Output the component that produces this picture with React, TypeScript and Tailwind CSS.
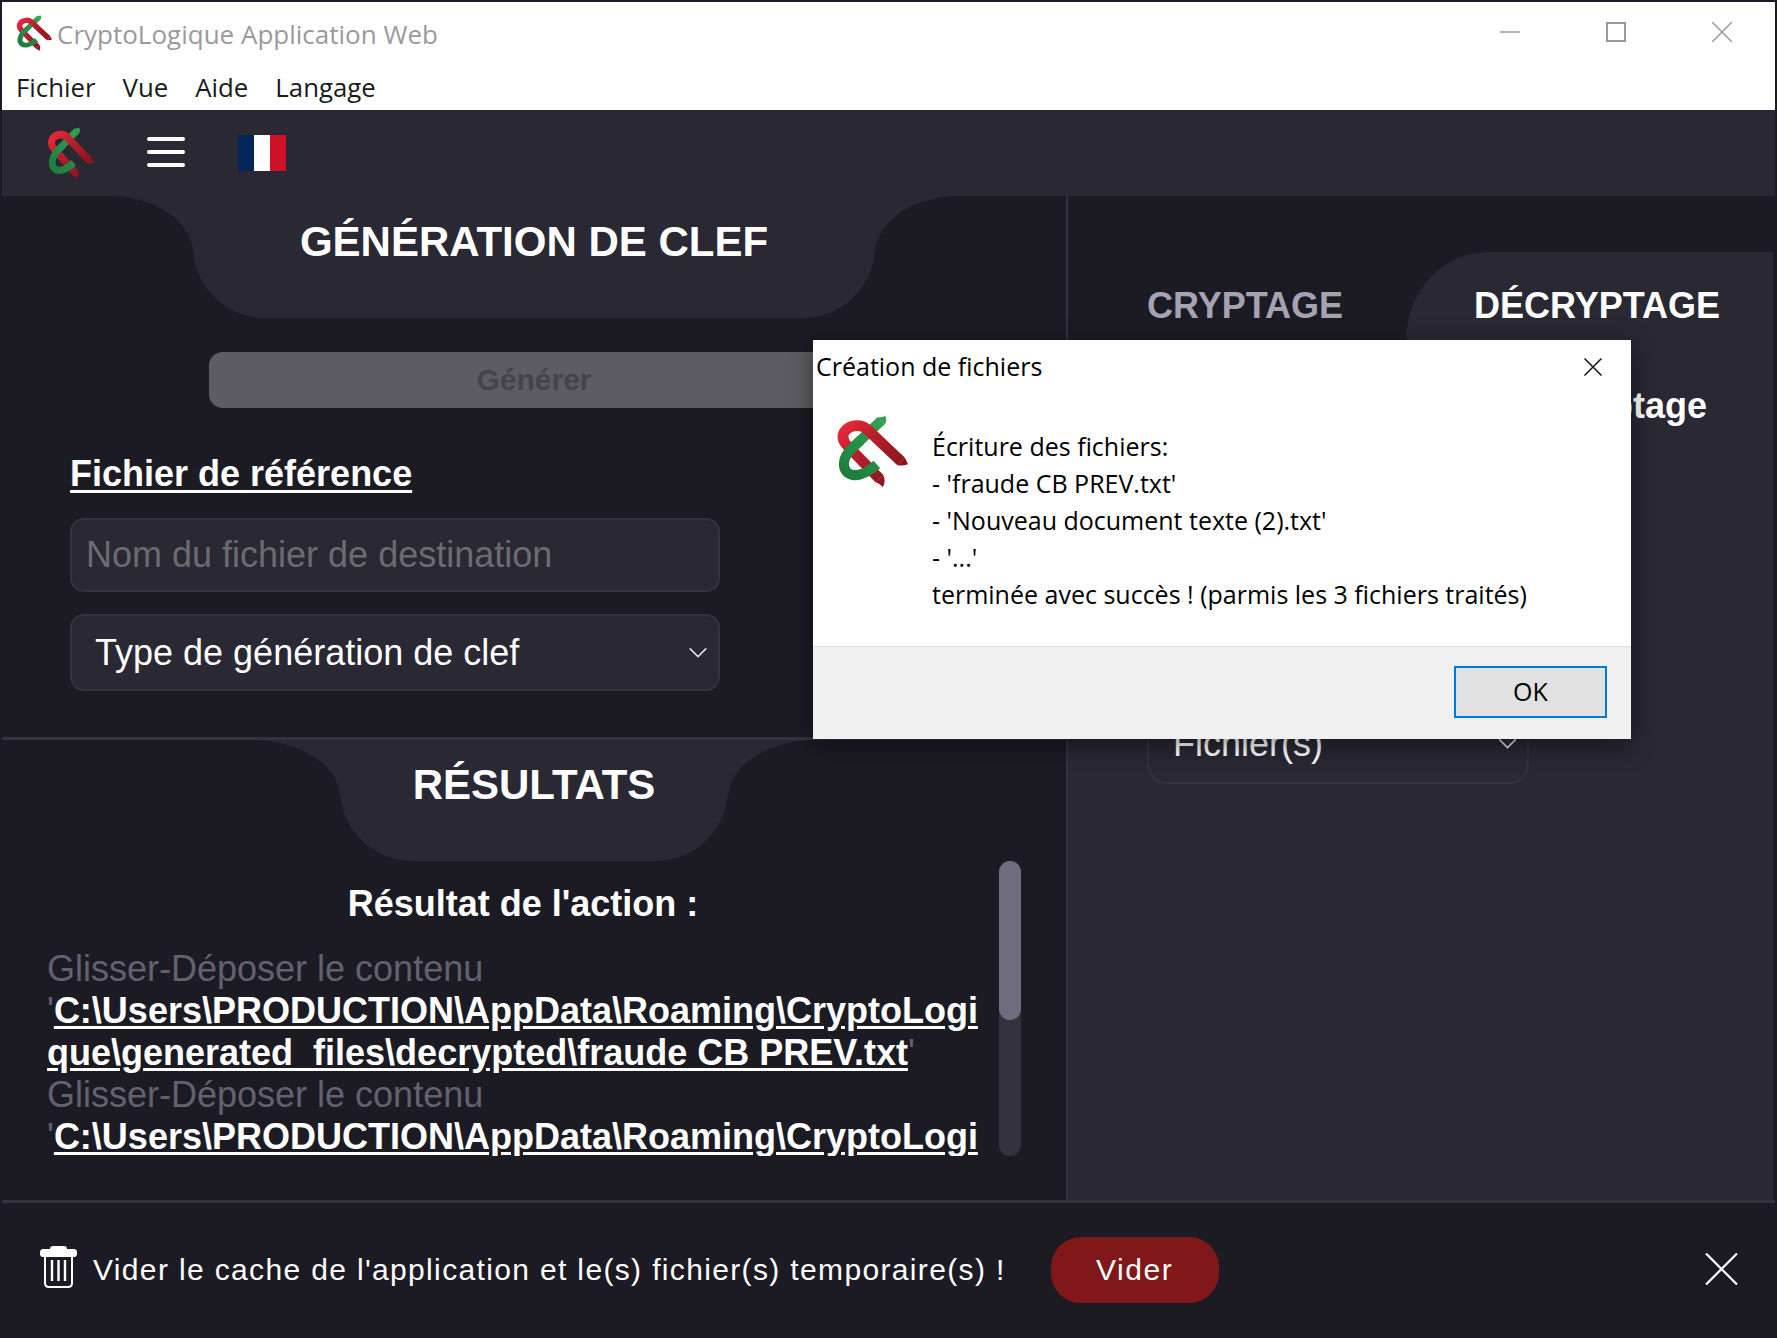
import React, { FC, useId } from "react";

const arial = "font-['Liberation_Sans',Arial,sans-serif]";
const segoe = "font-['Open_Sans',sans-serif]";

type LogoProps = {
  className: string;
};

const Logo: FC<LogoProps> = ({ className }) => {
  const id = useId();
  const red = `url(#${id}r)`;
  const green = `url(#${id}g)`;
  return (
    <svg viewBox="0 0 215 215" preserveAspectRatio="none" className={className}>
      <defs>
        <linearGradient id={`${id}r`} gradientUnits="userSpaceOnUse" x1="10" y1="20" x2="200" y2="190">
          <stop offset="0" stopColor="#ee2b3c" />
          <stop offset="0.4" stopColor="#b81f2d" />
          <stop offset="1" stopColor="#7f1319" />
        </linearGradient>
        <linearGradient id={`${id}g`} gradientUnits="userSpaceOnUse" x1="150" y1="0" x2="20" y2="190">
          <stop offset="0" stopColor="#35a557" />
          <stop offset="1" stopColor="#1c7a3a" />
        </linearGradient>
      </defs>
      {/* green strand behind the red one */}
      <path d="M135 17 L44 103" fill="none" stroke={green} strokeWidth="30" />
      <path d="M124 6 Q138 8 147 2 Q154 16 146 28 Z" fill={green} />
      {/* red strand */}
      <path d="M195 139 L92 42 C74 26 46 30 30 44 C14 60 20 78 34 92 L130 190" fill="none" stroke={red} strokeWidth="32" />
      <path d="M206 128 L215 147 Q200 153 184 150 Z" fill={red} />
      <path d="M141 179 Q150 198 140 215 Q132 206 119 201 Z" fill={red} />
      {/* green strand over the red one */}
      <path d="M74 75 L44 103 C20 128 18 158 34 172 C54 188 88 178 122 148" fill="none" stroke={green} strokeWidth="30" />
    </svg>
  );
};

// concave corners that flare a tab out of the top of its section
const TabFlare: FC<{ side: "left" | "right"; width: string; height: string }> = ({ side, width, height }) => {
  if (side === "left") {
    return (
      <div className={`absolute top-0 right-full bg-[#292833] ${width} ${height}`}>
        <div className="h-full w-full rounded-tr-[100%] bg-[#1c1b24]" />
      </div>
    );
  }
  return (
    <div className={`absolute top-0 left-full bg-[#292833] ${width} ${height}`}>
      <div className="h-full w-full rounded-tl-[100%] bg-[#1c1b24]" />
    </div>
  );
};

const Chevron: FC<{ className: string }> = ({ className }) => (
  <svg viewBox="0 0 20 12" className={className} fill="none" stroke="currentColor" strokeWidth="1.6">
    <path d="M1 1.5 L10 10.5 L19 1.5" />
  </svg>
);

const TitleBar: FC = () => (
  <div className={`${segoe} bg-white`}>
    <div className="relative flex h-[62px] items-center pl-[14px]">
      <Logo className="h-[36px] w-[36px]" />
      <span className="ml-[5px] mt-[2px] text-[26px] leading-none text-[#9a9a9a]">CryptoLogique Application Web</span>
      <div className="absolute right-[43px] top-[20px] flex items-start gap-[86px] text-[#999999]">
        <svg width="20" height="20" viewBox="0 0 20 20" stroke="currentColor" strokeWidth="1.5">
          <path d="M0 10 H20" />
        </svg>
        <svg width="20" height="20" viewBox="0 0 20 20" fill="none" stroke="currentColor" strokeWidth="2">
          <rect x="1" y="1" width="18" height="18" />
        </svg>
        <svg width="20" height="20" viewBox="0 0 20 20" stroke="currentColor" strokeWidth="1.5">
          <path d="M0 0 L20 20 M20 0 L0 20" />
        </svg>
      </div>
    </div>
    <div className="flex h-[46px] items-start gap-[27px] pl-[14px] text-[25.8px] leading-[46px] text-[#1a1a1a]">
      <span>Fichier</span>
      <span>Vue</span>
      <span>Aide</span>
      <span>Langage</span>
    </div>
  </div>
);

const Toolbar: FC = () => (
  <div className="flex h-[86px] items-start bg-[#292833] pl-[45px]">
    <Logo className="mt-[17px] h-[52px] w-[47px]" />
    <div className="ml-[53px] mt-[27px] flex w-[38px] flex-col gap-[9px]">
      <div className="h-[4px] rounded-full bg-white" />
      <div className="h-[4px] rounded-full bg-white" />
      <div className="h-[4px] rounded-full bg-white" />
    </div>
    <div className="ml-[53px] mt-[25px] flex h-[36px] w-[48px]">
      <div className="w-1/3 bg-[#03265a]" />
      <div className="w-1/3 bg-white" />
      <div className="w-1/3 bg-[#ce1126]" />
    </div>
  </div>
);

const KeyPanel: FC = () => (
  <section className="h-[544px] border-b-[3px] border-[#33323e]">
    <div className="relative mx-auto h-[122px] w-[682px] rounded-b-[72px] bg-[#292833] pt-[21px] text-center">
      <TabFlare side="left" width="w-[84px]" height="h-[58px]" />
      <TabFlare side="right" width="w-[84px]" height="h-[58px]" />
      <h1 className="relative text-[42px] font-bold leading-[50px] text-white">GÉNÉRATION DE CLEF</h1>
    </div>
    <button className="mx-auto mt-[34px] block h-[56px] w-[650px] rounded-[14px] bg-[#5d5c62] pb-[2px] text-[30px] font-bold text-[#45444b]">
      Générer
    </button>
    <div className="ml-[68px] w-[650px]">
      <h2 className="mt-[48px] text-[36px] font-bold leading-[36px] text-white underline underline-offset-[4px]">
        Fichier de référence
      </h2>
      <input
        placeholder="Nom du fichier de destination"
        className="mt-[26px] block h-[74px] w-full rounded-[14px] border-2 border-[#33323e] bg-[#292833] px-[14px] text-[36px] outline-none placeholder:text-[#6c6c70]"
      />
      <div className="mt-[22px] flex h-[77px] items-center justify-between rounded-[14px] border-2 border-[#33323e] bg-[#292833] pl-[23px] pr-[10px] text-[36px] text-white">
        <span>Type de génération de clef</span>
        <Chevron className="h-[11px] w-[20px] text-[#e5e5e5]" />
      </div>
    </div>
  </section>
);

const ResultLine: FC<{ path: string }> = ({ path }) => (
  <>
    <span className="block text-[#63616f]">Glisser-Déposer le contenu</span>
    <span className="block break-all text-[#63616f]">
      '<span className="font-bold text-white underline underline-offset-[3px]">{path}</span>'
    </span>
  </>
);

const ResultsPanel: FC = () => (
  <section className="flex-1">
    <div className="relative mx-auto h-[121px] w-[388px] rounded-b-[72px] bg-[#292833] pt-[20px] text-center">
      <TabFlare side="left" width="w-[88px]" height="h-[58px]" />
      <TabFlare side="right" width="w-[88px]" height="h-[58px]" />
      <h1 className="relative text-[42px] font-bold leading-[50px] text-white">RÉSULTATS</h1>
    </div>
    <div className="flex pl-[45px]">
      <div className="h-[295px] w-[952px] overflow-hidden pt-[22px]">
        <h3 className="text-center text-[36px] font-bold leading-[42px] text-white">Résultat de l'action :</h3>
        <p className="mt-[23px] w-[935px] text-[36px] leading-[42px]">
          <ResultLine path="C:\Users\PRODUCTION\AppData\Roaming\CryptoLogique\generated_files\decrypted\fraude CB PREV.txt" />
          <ResultLine path="C:\Users\PRODUCTION\AppData\Roaming\CryptoLogique\generated_files\decrypted\Nouveau document texte (2).txt" />
        </p>
      </div>
      <div className="h-[295px] w-[22px] rounded-full bg-[#33323d]">
        <div className="h-[159px] rounded-full bg-[#6e6c7e]" />
      </div>
    </div>
  </section>
);

const DecryptPanel: FC = () => (
  <section className="flex w-[707px] flex-col border-l-2 border-[#33323e]">
    <div className="flex h-[144px] items-end">
      <div className="w-[338px] pb-[14px] pl-[79px] text-[36px] font-bold leading-[40px] text-[#a5a3b2]">CRYPTAGE</div>
      <div className="h-[88px] flex-1 rounded-tl-[82px_88px] bg-[#292833] pl-[68px] pt-[34px] text-[36px] font-bold leading-[40px] text-white">
        DÉCRYPTAGE
      </div>
    </div>
    <div className="flex-1 bg-[#292833] pl-[79px]">
      <h2 className="mt-[46px] pr-[66px] text-right text-[36px] font-bold leading-[40px] text-white">Type de décryptage</h2>
      <div className="mt-[281px] flex h-[77px] w-[382px] items-start justify-between rounded-[20px] border-2 border-[#33323e] pl-[24px] pr-[10px] pt-[13px] text-[36px] leading-[44px] text-white">
        <span>Fichier(s)</span>
        <Chevron className="mt-[16px] h-[11px] w-[19px] text-[#e5e5e5]" />
      </div>
    </div>
  </section>
);

const CacheBar: FC = () => (
  <div className="flex h-[136px] items-center border-t-[3px] border-[#33323e] bg-[#1c1b24] pl-[38px] pr-[37px] text-white">
    <svg width="37" height="43" viewBox="0 0 37 43" className="mb-[6px] shrink-0">
      <path d="M13 1 H24 C26 1 27 2 27 4 H34 C36 4 37 5.5 37 7 V9 C37 11 36 12 34 12 H3 C1 12 0 11 0 9 V7 C0 5.5 1 4 3 4 H10 C10 2 11 1 13 1 Z" fill="#fff" />
      <path d="M5 12 V38 C5 40.5 6.5 42 9 42 H28 C30.5 42 32 40.5 32 38 V12" fill="none" stroke="#fff" strokeWidth="2" />
      <path d="M12 15 V36 M18.5 15 V36 M25 15 V36" stroke="#fff" strokeWidth="2.4" />
    </svg>
    <span className="ml-[16px] text-[30px] tracking-[1.35px]">Vider le cache de l'application et le(s) fichier(s) temporaire(s) !</span>
    <button className="ml-[45px] h-[66px] w-[168px] rounded-[30px] bg-[#801718] text-[30px] tracking-[1.6px] text-white">Vider</button>
    <svg width="33" height="32" viewBox="0 0 33 32" stroke="#fff" strokeWidth="2.2" className="mb-[2px] ml-auto">
      <path d="M1 0.5 L32 31.5 M32 0.5 L1 31.5" />
    </svg>
  </div>
);

const MessageDialog: FC = () => (
  <div className={`${segoe} absolute left-[811px] top-[338px] flex h-[399px] w-[818px] flex-col bg-white text-black shadow-[0_6px_24px_rgba(0,0,0,0.45)]`}>
    <div className="flex h-[54px] items-center justify-between pl-[3px] pr-[29px] text-[25px]">
      <span>Création de fichiers</span>
      <svg width="18" height="18" viewBox="0 0 18 18" stroke="#111" strokeWidth="1.5">
        <path d="M0.5 0.5 L17.5 17.5 M17.5 0.5 L0.5 17.5" />
      </svg>
    </div>
    <div className="flex flex-1 pl-[23px] pt-[21px]">
      <Logo className="h-[72px] w-[72px]" />
      <p className="ml-[24px] mt-[13px] text-[25px] leading-[37px]">
        Écriture des fichiers:
        <br />- 'fraude CB PREV.txt'
        <br />- 'Nouveau document texte (2).txt'
        <br />- '...'
        <br />
        terminée avec succès ! (parmis les 3 fichiers traités)
      </p>
    </div>
    <div className="flex h-[93px] items-start justify-end border-t border-[#dfdfdf] bg-[#f0f0f0] pr-[24px] pt-[19px]">
      <button className="h-[52px] w-[153px] border-2 border-[#0078d7] bg-[#e1e1e1] text-[25px]">OK</button>
    </div>
  </div>
);

const App: FC = () => {
  return (
    <div className={`${arial} relative flex h-[1338px] w-[1777px] flex-col overflow-hidden border-2 border-[#1a1a28] bg-[#1c1b24]`}>
      <TitleBar />
      <Toolbar />
      <div className="flex flex-1">
        <div className="flex w-[1064px] flex-col">
          <KeyPanel />
          <ResultsPanel />
        </div>
        <DecryptPanel />
      </div>
      <CacheBar />
      <MessageDialog />
    </div>
  );
};

export default App;
